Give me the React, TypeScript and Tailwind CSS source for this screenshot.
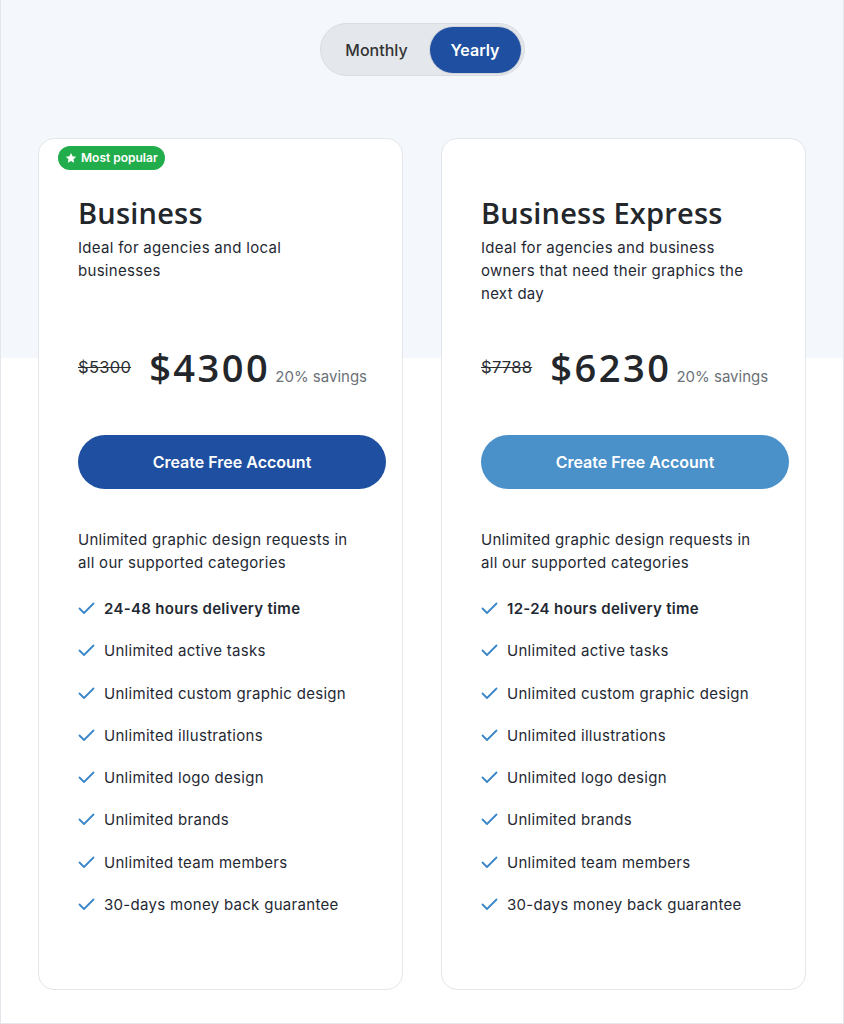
import React, { useState } from 'react';

const plans = [
  {
    name: 'Business',
    desc: 'Ideal for agencies and local businesses',
    oldPrice: '$5300',
    price: '$4300',
    popular: true,
    btn: 'bg-[#1e4fa0]',
    delivery: '24-48 hours delivery time',
  },
  {
    name: 'Business Express',
    desc: 'Ideal for agencies and business owners that need their graphics the next day',
    oldPrice: '$7788',
    price: '$6230',
    popular: false,
    btn: 'bg-[#4a90c9]',
    delivery: '12-24 hours delivery time',
  },
];

const features = [
  'Unlimited active tasks',
  'Unlimited custom graphic design',
  'Unlimited illustrations',
  'Unlimited logo design',
  'Unlimited brands',
  'Unlimited team members',
  '30-days money back guarantee',
];

function Check() {
  return (
    <svg width="17" height="13" viewBox="0 0 17 13" fill="none" className="shrink-0">
      <polyline points="1.5,6.5 6,11 15.5,1.5" stroke="#3a86c8" strokeWidth="1.8" strokeLinecap="round" strokeLinejoin="round" />
    </svg>
  );
}

function Star() {
  return (
    <svg width="12" height="12" viewBox="0 0 24 24" fill="white">
      <path d="M12 1.8l3.1 6.6 7.2.9-5.3 5 1.4 7.1L12 17.9l-6.4 3.5 1.4-7.1-5.3-5 7.2-.9z" />
    </svg>
  );
}

export default function App() {
  const [yearly, setYearly] = useState(true);

  return (
    <div className="h-[1024px] border-x border-b border-[#e3e6ea] bg-[linear-gradient(to_bottom,#f4f7fb_358px,#ffffff_358px)] font-['Inter',sans-serif] text-[#1f2933]">
      {/* Toggle */}
      <div className="flex justify-center pt-[23px]">
        <div className="flex h-[53px] items-center rounded-full border border-[#d9dde2] bg-[#e4e7eb] p-[3px]">
          <button
            onClick={() => setYearly(false)}
            className={`h-[46px] w-[106px] rounded-full text-[16px] font-medium ${!yearly ? 'bg-[#1e4fa0] text-white font-semibold' : 'text-[#333]'}`}
          >
            Monthly
          </button>
          <button
            onClick={() => setYearly(true)}
            className={`h-[46px] w-[91px] rounded-full text-[16px] ${yearly ? 'bg-[#1e4fa0] font-semibold text-white shadow-[0_0_0_1px_#d0d5db]' : 'font-medium text-[#333]'}`}
          >
            Yearly
          </button>
        </div>
      </div>

      {/* Cards */}
      <div className="mt-[62px] grid grid-cols-2 gap-[38px] px-[37px]">
        {plans.map((p) => (
          <div key={p.name} className="relative rounded-[16px] border border-[#e3e6ea] bg-white pb-[73px] pl-[39px] pr-[16px] pt-[57px] tracking-[0.3px]">
            {p.popular && (
              <div className="absolute left-[19px] top-[7px] flex h-[24px] items-center gap-[4px] rounded-full bg-[#22ad4c] px-[7px] text-[12px] font-semibold tracking-normal text-white">
                <Star />
                Most popular
              </div>
            )}
            <h2 className="font-['Open_Sans',sans-serif] text-[29px] font-semibold leading-[34px] tracking-[0.2px] text-[#23272b]">{p.name}</h2>
            <p className="mt-[6px] h-[69px] max-w-[275px] text-[15px] leading-[23px]">{p.desc}</p>

            <div className="mt-[41px] flex items-center">
              <span className="text-[16.5px] text-[#2b2f33] line-through">{p.oldPrice}</span>
              <div className="ml-[18px] flex items-baseline gap-[5px]">
                <span className="font-['Open_Sans',sans-serif] text-[38px] font-semibold leading-[43px] tracking-[2.5px] text-[#23272b]">{p.price}</span>
                <span className="text-[15px] tracking-normal text-[#6b7178]">20% savings</span>
              </div>
            </div>

            <button className={`mt-[46px] h-[54px] w-[308px] rounded-full ${p.btn} text-[16px] font-semibold tracking-normal text-white`}>
              Create Free Account
            </button>

            <p className="mt-[39px] max-w-[275px] text-[15px] leading-[23px]">
              Unlimited graphic design requests in all our supported categories
            </p>

            <ul className="mt-[23px] flex flex-col gap-[19.3px] text-[15px] leading-[23px]">
              <li className="flex items-center gap-[9px] font-semibold">
                <Check />
                {p.delivery}
              </li>
              {features.map((f) => (
                <li key={f} className="flex items-center gap-[9px]">
                  <Check />
                  {f}
                </li>
              ))}
            </ul>
          </div>
        ))}
      </div>
    </div>
  );
}
